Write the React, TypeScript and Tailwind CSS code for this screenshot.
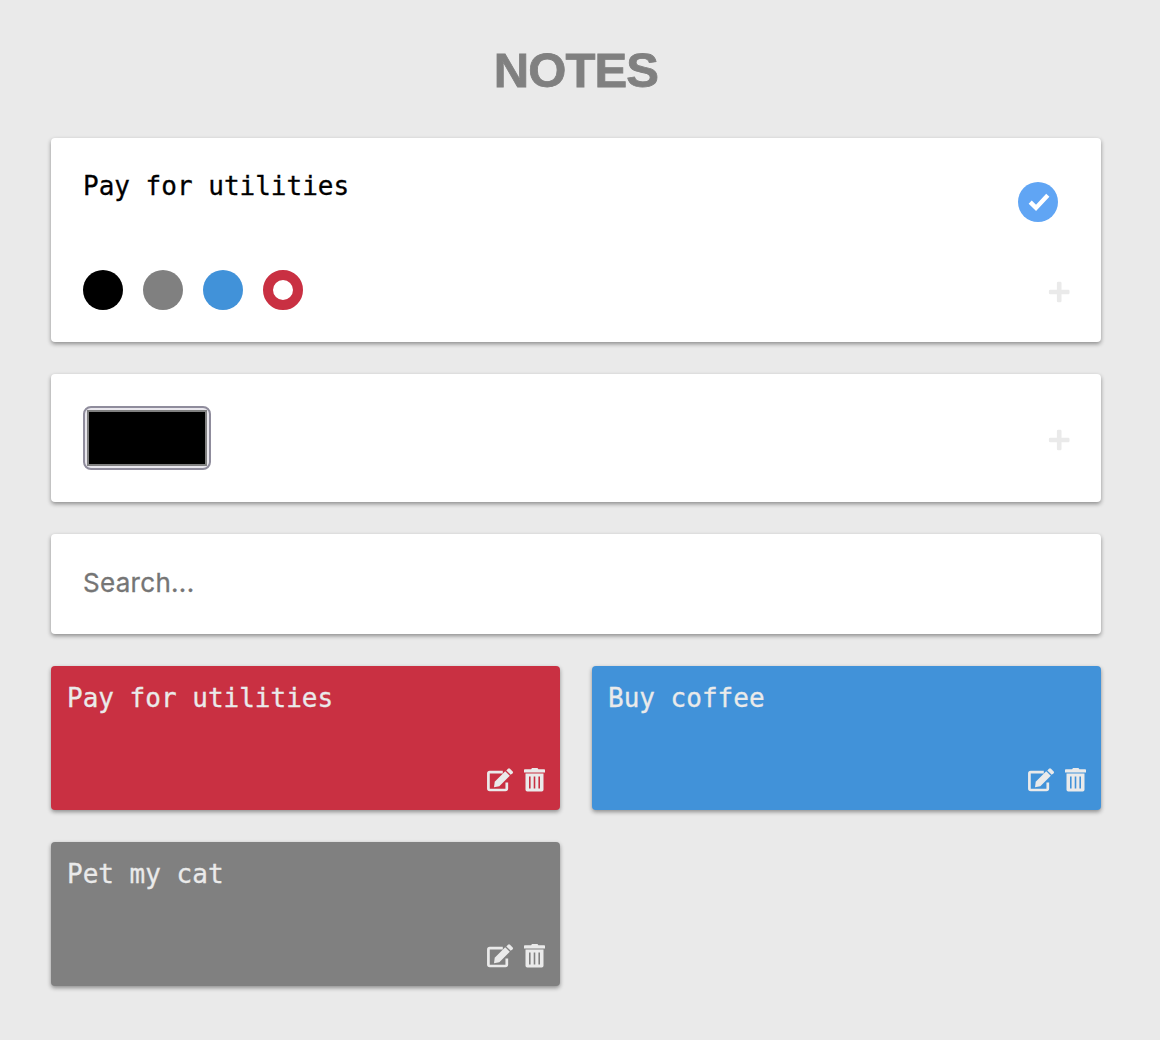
const card = "bg-white rounded-[4px] shadow-[0_2px_4px_rgba(0,0,0,0.4)]";
const mono = "font-['DejaVu_Sans_Mono',monospace] text-[26px] leading-8 [-webkit-text-stroke:0.3px_currentColor]";

function Plus() {
  return (
    <svg width="22" height="22" viewBox="0 0 22 22" fill="#eaeaea">
      <rect x="0.9" y="8.7" width="20.6" height="4.6" rx="1.2" />
      <rect x="8.9" y="0.7" width="4.6" height="20.6" rx="1.2" />
    </svg>
  );
}

function Check() {
  return (
    <svg width="40" height="40" viewBox="0 0 40 40" fill="none">
      <circle cx="20" cy="20" r="20" fill="#60a5f4" />
      <path d="M12.2 20.1L18 25.9L29.8 13.2" stroke="white" strokeWidth="4.4" />
    </svg>
  );
}

function Edit() {
  return (
    <svg width="27" height="24" viewBox="0 0 27 24">
      <path d="M15.8 4.2H2.8Q1.4 4.2 1.4 5.6V20.6Q1.4 22 2.8 22H18.4Q19.8 22 19.8 20.6V14.5" fill="none" stroke="currentColor" strokeWidth="2.7" />
      <path d="M7 19.2L7.7 13.7L18.2 3.2L22.8 7.8L12.3 18.3L7 19.2Z" fill="currentColor" />
      <path d="M19.3 2.4L21 0.8Q22 -0.1 23 0.8L25.7 3.4Q26.5 4.3 25.6 5.2L23.7 6.7Z" fill="currentColor" />
    </svg>
  );
}

function Trash() {
  return (
    <svg width="22" height="24" viewBox="0 0 22 24" fill="currentColor">
      <path d="M8 0H13.5L14.4 1.2H20.3Q21 1.2 21 2V4.4H0V2Q0 1.2 .8 1.2H7.1Z" />
      <path fillRule="evenodd" d="M1.5 5.5H19.5V21.8Q19.5 23.6 17.7 23.6H3.3Q1.5 23.6 1.5 21.8ZM5 8.5V20.5H6.6V8.5ZM9.7 8.5V20.5H11.3V8.5ZM14.4 8.5V20.5H16V8.5Z" />
    </svg>
  );
}

function Note({ text, color }: { text: string; color: string }) {
  return (
    <article className={`flex h-36 flex-col justify-between rounded-[4px] px-4 pt-4 pb-[18px] text-[#eaeaea] shadow-[0_2px_4px_rgba(0,0,0,0.4)] ${color}`}>
      <p className={mono}>{text}</p>
      <div className="-mr-0.5 flex items-center justify-end gap-[10px]">
        <Edit />
        <Trash />
      </div>
    </article>
  );
}

export default function App() {
  return (
    <main className="h-[1040px] bg-[#eaeaea] pl-[51px] pr-[59px] pt-[42px] font-['Inter',sans-serif]">
      <h1 className="h-24 text-center font-['Liberation_Sans',sans-serif] text-[49px] font-bold leading-[56px] tracking-[-0.9px] text-[#808080] [-webkit-text-stroke:0.8px_#808080]">NOTES</h1>
      <div className="flex flex-col gap-8">
        <section className={`${card} flex h-[204px] justify-between p-8`}>
          <div className="flex flex-col justify-between">
            <p className={mono}>Pay for utilities</p>
            <div className="flex gap-5">
              <span className="size-10 rounded-full bg-black" />
              <span className="size-10 rounded-full bg-[#808080]" />
              <span className="size-10 rounded-full bg-[#4192d9]" />
              <span className="size-10 rounded-full border-10 border-[#c93042] bg-white" />
            </div>
          </div>
          <div className="-mr-px flex flex-col items-end justify-between pt-3 pb-[7px]">
            <div className="mr-3"><Check /></div>
            <Plus />
          </div>
        </section>
        <section className={`${card} flex h-32 items-center justify-between p-8`}>
          <div className="h-16 w-32 rounded-[8px] border-2 border-[#8f8c9c] bg-[#e9e7ed] p-[2px]">
            <div className="h-full border-2 border-[#808080] bg-black" />
          </div>
          <div className="-mr-px pt-[3px]"><Plus /></div>
        </section>
        <section className={`${card} h-[100px] px-8 py-[33px]`}>
          <p className="text-[26px] leading-8 tracking-[0.3px] text-[#757575] [-webkit-text-stroke:0.3px_#757575]">Search...</p>
        </section>
        <div className="grid grid-cols-2 gap-8">
          <Note text="Pay for utilities" color="bg-[#c93042]" />
          <Note text="Buy coffee" color="bg-[#4192d9]" />
          <Note text="Pet my cat" color="bg-[#808080]" />
        </div>
      </div>
    </main>
  );
}
